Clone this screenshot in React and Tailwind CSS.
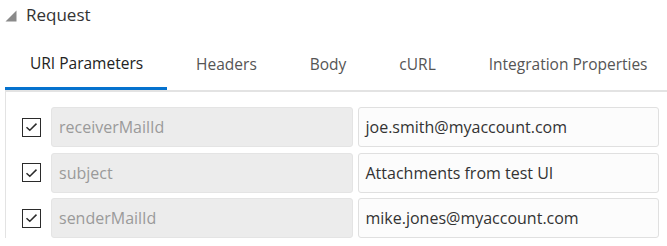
import React from 'react';

const tabs = ['URI Parameters', 'Headers', 'Body', 'cURL', 'Integration Properties'];

const params = [
  { name: 'receiverMailId', value: 'joe.smith@myaccount.com' },
  { name: 'subject', value: 'Attachments from test UI' },
  { name: 'senderMailId', value: 'mike.jones@myaccount.com' },
];

const CheckBox = () => (
  <div className="w-[19px] h-[19px] border-[1.5px] border-[#2b2b2b] bg-white flex items-center justify-center shrink-0">
    <svg width="13" height="10" viewBox="0 0 13 10">
      <path d="M1.5 5.2 L4.8 8.3 L11.5 1.6" fill="none" stroke="#2b2b2b" strokeWidth="1.5" />
    </svg>
  </div>
);

export default function App() {
  return (
    <div className="w-[667px] h-[246px] overflow-hidden bg-white text-[#333]" style={{ fontFamily: '"Open Sans", "Noto Sans", sans-serif' }}>
      {/* section header */}
      <div className="h-[30px] flex items-center pl-[5px]">
        <svg width="12" height="12" viewBox="0 0 12 12" className="mt-[1px]">
          <path d="M11.5 0.5 L11.5 11.5 L0.5 11.5 Z" fill="#8a8a8a" />
        </svg>
        <span className="ml-[9px] text-[17px] text-[#333]">Request</span>
      </div>

      {/* tabs */}
      <div className="mt-[10px] ml-[5px] flex border-b-2 border-[#e3e3e3] whitespace-nowrap">
        {tabs.map((t, i) => (
          <div
            key={t}
            className={
              i === 0
                ? 'shrink-0 h-[50px] pl-[25px] pr-[24px] flex items-center text-[15.5px] text-[#222] border-b-[3px] border-[#0572ce] -mb-[2px]'
                : 'shrink-0 h-[50px] pl-[29px] pr-[24px] flex items-center text-[15.5px] text-[#555]'
            }
          >
            {t}
          </div>
        ))}
      </div>

      {/* parameters */}
      <div className="ml-[5px] border-l border-[#e3e3e3] pt-[15px] pr-[8px] flex flex-col gap-[5.5px]">
        {params.map((p) => (
          <div key={p.name} className="h-10 flex items-center">
            <div className="w-[45px] pl-[16px] flex items-center">
              <CheckBox />
            </div>
            <div className="flex-1 h-10 flex items-center px-[7px] rounded-[3px] bg-[#ececec] border border-[#e4e4e4] text-[16px] text-[#9a9a9a]">
              {p.name}
            </div>
            <div className="flex-1 ml-[5px] h-10 flex items-center px-[7px] rounded-[3px] bg-[#fcfcfc] border border-[#e0e0e0] text-[16px] text-[#333]">
              {p.value}
            </div>
          </div>
        ))}
      </div>
    </div>
  );
}
